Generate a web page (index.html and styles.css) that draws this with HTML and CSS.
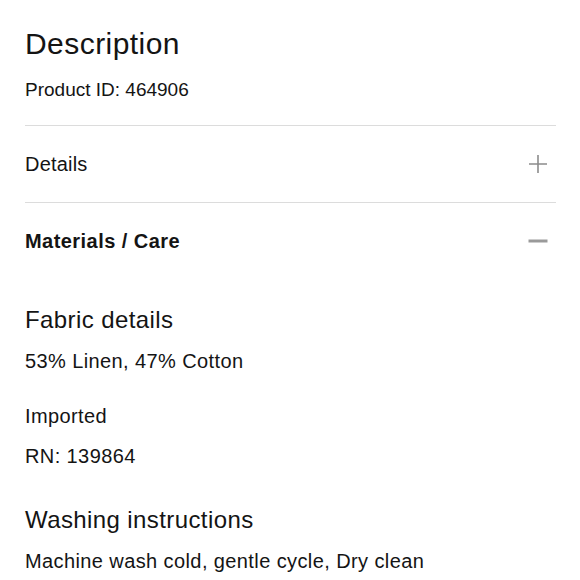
FILE: index.html
```html
<!DOCTYPE html>
<html>
<head>
<meta charset="utf-8">
<link rel="stylesheet" href="styles.css">
</head>
<body>
<div class="page">
  <section class="intro">
    <h1 class="title">Description</h1>
    <p class="pid">Product ID: 464906</p>
  </section>
  <div class="row">
    <span class="row-label">Details</span>
    <svg class="icon" width="20" height="20" viewBox="0 0 20 20"><path d="M10 1V19M1 10H19" stroke="#8c8c8c" stroke-width="1.6" fill="none"/></svg>
  </div>
  <div class="row open">
    <span class="row-label bold">Materials / Care</span>
    <svg class="icon" width="20" height="20" viewBox="0 0 20 20"><path d="M0.5 10H19.5" stroke="#9a9a9a" stroke-width="3" fill="none"/></svg>
  </div>
  <section class="panel">
    <h2 class="sub">Fabric details</h2>
    <p class="txt first">53% Linen, 47% Cotton</p>
    <p class="txt gap-lg">Imported</p>
    <p class="txt gap-sm">RN: 139864</p>
    <h2 class="sub gap-xl">Washing instructions</h2>
    <p class="txt second">Machine wash cold, gentle cycle, Dry clean</p>
  </section>
</div>
</body>
</html>
```
FILE: styles.css
```css
html, body {
  margin: 0;
  padding: 0;
  background: #ffffff;
}
body {
  font-family: "Liberation Sans", Arial, sans-serif;
  color: #141414;
}
.page {
  padding: 26px 24px 0 25px;
}
.intro {
  border-bottom: 1px solid #dcdcdc;
  padding-bottom: 23px;
}
.title {
  margin: 0;
  font-weight: 400;
  font-size: 30px;
  line-height: 36px;
  letter-spacing: 0.45px;
}
.pid {
  margin: 16px 0 0;
  font-size: 19px;
  line-height: 24px;
}
.row {
  display: flex;
  align-items: center;
  justify-content: space-between;
  padding: 26px 8px 26px 0;
  height: 24px;
  border-bottom: 1px solid #dcdcdc;
}
.row.open {
  border-bottom: none;
}
.row-label {
  font-size: 20px;
  line-height: 24px;
  letter-spacing: 0.2px;
}
.row-label.bold {
  font-weight: 700;
  letter-spacing: 0.45px;
}
.icon {
  display: block;
}
.panel {
  padding-top: 26px;
}
.sub {
  margin: 0;
  font-weight: 400;
  font-size: 24px;
  line-height: 30px;
  letter-spacing: 0.4px;
}
.txt {
  margin: 0;
  font-size: 20px;
  line-height: 24px;
  letter-spacing: 0.4px;
}
.txt.first {
  margin-top: 14px;
}
.txt.second {
  margin-top: 14px;
}
.gap-lg {
  margin-top: 31px;
}
.gap-sm {
  margin-top: 16px;
}
.sub.gap-xl {
  margin-top: 37px;
}
```
